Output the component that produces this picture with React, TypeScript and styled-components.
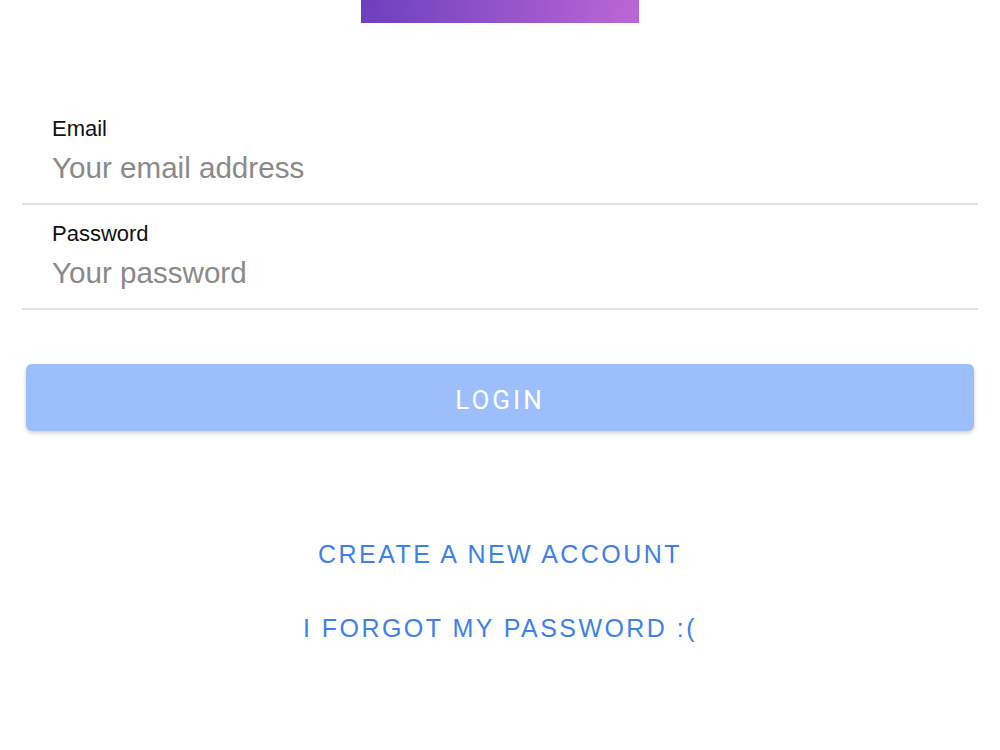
import styled, { createGlobalStyle } from "styled-components";

const GlobalStyle = createGlobalStyle`
    html, body {
        margin: 0;
        padding: 0;
        background: #ffffff;
        font-family: "Liberation Sans", Arial, sans-serif;
    }
`;

const fields = [
    { name: "email", label: "Email", placeholder: "Your email address", type: "email" },
    { name: "password", label: "Password", placeholder: "Your password", type: "password" },
];

const App = () => {
    return (
        <>
            <GlobalStyle />
            <Page>
                <Banner />
                <Form onSubmit={(e) => e.preventDefault()}>
                    {fields.map((f) => (
                        <Field key={f.name}>
                            <Label htmlFor={f.name}>{f.label}</Label>
                            <Input id={f.name} type={f.type} placeholder={f.placeholder} />
                        </Field>
                    ))}
                    <LoginButton type="submit">Login</LoginButton>
                </Form>
                <Links>
                    <TextLink href="#">Create a new account</TextLink>
                    <TextLink href="#">I forgot my password :(</TextLink>
                </Links>
            </Page>
        </>
    );
};

export default App;

// styled-component

const Page = styled.div`
    display: flex;
    flex-direction: column;
    padding: 0 22px;
    min-height: 750px;
    box-sizing: border-box;
`;

const Banner = styled.div`
    align-self: center;
    width: 278px;
    height: 23px;
    background: linear-gradient(100deg, #6c3fbe 0%, #9353c8 50%, #bd66d6 100%);
    margin-bottom: 77px;
`;

const Form = styled.form`
    display: flex;
    flex-direction: column;
`;

const Field = styled.div`
    display: flex;
    flex-direction: column;
    padding: 16px 30px 15px;
    border-bottom: 2px solid #e2e2e2;
    gap: 6px;
`;

const Label = styled.label`
    font-size: 22px;
    line-height: 26px;
    color: #111;
`;

const Input = styled.input`
    border: none;
    outline: none;
    padding: 0;
    background: transparent;
    font-family: "Liberation Sans", Arial, sans-serif;
    font-size: 29.6px;
    line-height: 40px;
    height: 40px;
    color: #222;

    &::placeholder {
        color: #8a8a8a;
    }
`;

const LoginButton = styled.button`
    margin: 54px 4px 0;
    height: 67px;
    padding: 4px 0 0;
    border: none;
    border-radius: 6px;
    background: #9cbffc;
    color: #ffffff;
    font-family: Roboto, "Liberation Sans", sans-serif;
    font-size: 26px;
    letter-spacing: 3px;
    text-transform: uppercase;
    box-shadow: 0 2px 4px rgba(0, 0, 0, 0.2);
    cursor: pointer;
`;

const Links = styled.div`
    display: flex;
    flex-direction: column;
    align-items: center;
    gap: 44px;
    margin-top: 108px;
`;

const TextLink = styled.a`
    font-size: 25px;
    line-height: 30px;
    letter-spacing: 2.45px;
    text-transform: uppercase;
    color: #3d82ea;
    text-decoration: none;
`;
